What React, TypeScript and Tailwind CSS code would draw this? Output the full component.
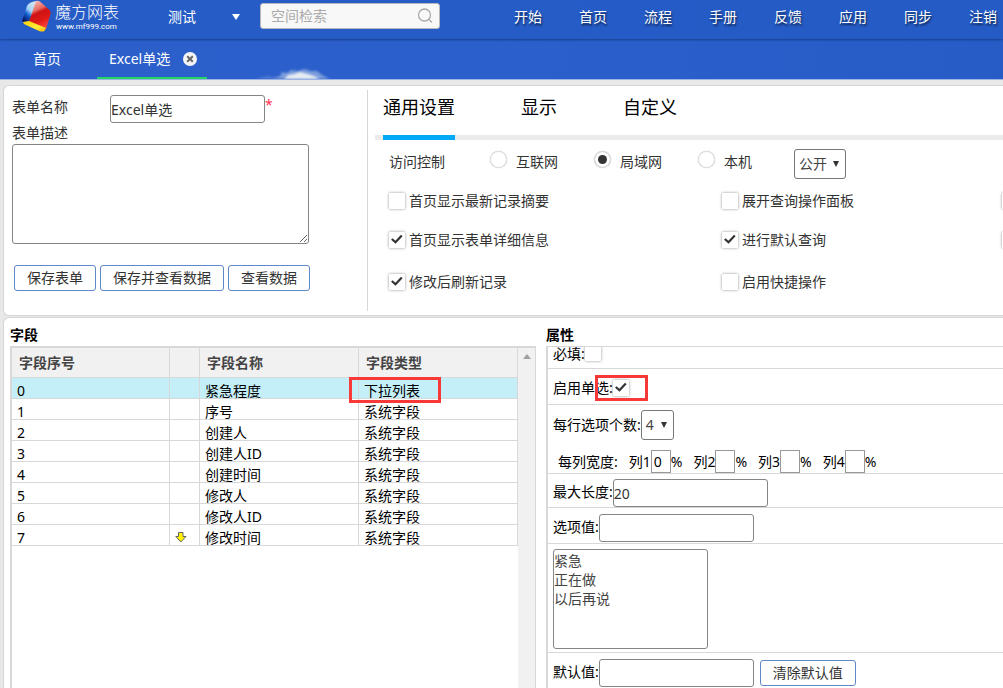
import React from "react";

const NAV = ["开始", "首页", "流程", "手册", "反馈", "应用", "同步", "注销"];
const FIELDS = [
  ["紧急程度", "下拉列表"],
  ["序号", "系统字段"],
  ["创建人", "系统字段"],
  ["创建人ID", "系统字段"],
  ["创建时间", "系统字段"],
  ["修改人", "系统字段"],
  ["修改人ID", "系统字段"],
  ["修改时间", "系统字段"],
];

const INPUT = "h-7 w-[155px] rounded-[3px] border border-[#858585] bg-white text-[#333] outline-none";
const BUTTON = "h-[26px] shrink-0 rounded-[3px] border border-[#5f88cb] bg-white px-3 text-[#333]";

function Logo() {
  return (
    <svg className="h-8 w-[30px] shrink-0" viewBox="0 0 30 32" aria-hidden="true">
      <defs>
        <linearGradient id="cubeRed" x1="0.3" y1="0" x2="0.65" y2="1">
          <stop offset="0" stopColor="#f6b9b4" />
          <stop offset="0.3" stopColor="#e86a62" />
          <stop offset="0.42" stopColor="#cc1414" />
          <stop offset="0.7" stopColor="#e01a16" />
          <stop offset="1" stopColor="#fb4a40" />
        </linearGradient>
        <linearGradient id="cubeBlue" x1="0.9" y1="0" x2="0.2" y2="1">
          <stop offset="0" stopColor="#e6eaf2" />
          <stop offset="0.5" stopColor="#a5d4f7" />
          <stop offset="0.7" stopColor="#1560cf" />
          <stop offset="1" stopColor="#02125f" />
        </linearGradient>
        <linearGradient id="cubeYellow" x1="0" y1="0" x2="1" y2="1">
          <stop offset="0" stopColor="#ffd000" />
          <stop offset="0.6" stopColor="#ffee3a" />
          <stop offset="1" stopColor="#f5b000" />
        </linearGradient>
      </defs>
      <path d="M14 1 Q7 2 5 6 L0 21 Q1 23 7 21 L17 2 Z" fill="url(#cubeBlue)" />
      <path d="M14 1 Q16 .5 18 1.500 L27.500 10 Q29 11.500 28.500 14 L24 29 L7 21.500 L11 10 Z" fill="url(#cubeRed)" />
      <path d="M1 22 L7 21 L24 28 L22.500 31 Q20 32 17 31 L2 24 Z" fill="url(#cubeYellow)" />
    </svg>
  );
}

function CheckBox({ checked = false, label }: { checked?: boolean; label?: string }) {
  return (
    <span className="relative inline-flex size-4 shrink-0">
      <input
        type="checkbox"
        defaultChecked={checked}
        aria-label={label}
        className="peer size-4 appearance-none rounded-[1px] bg-white shadow-[0_0_3px_rgba(0,0,0,0.45)]"
      />
      <svg className="pointer-events-none absolute inset-0 hidden size-4 peer-checked:block" viewBox="0 0 16 16" aria-hidden="true">
        <path d="M2.800 7 L6.500 10.300 L12.800 3.600" fill="none" stroke="#333" strokeWidth="2.200" />
      </svg>
    </span>
  );
}

function Check({ text, checked }: { text: string; checked?: boolean }) {
  return (
    <label className="flex items-center gap-1 whitespace-nowrap">
      <CheckBox checked={checked} />
      {text}
    </label>
  );
}

function Radio({ text, checked }: { text: string; checked?: boolean }) {
  return (
    <label className="flex shrink-0 items-start gap-[9px]">
      <input
        type="radio"
        name="access"
        defaultChecked={checked}
        className="mt-0.5 size-[17px] appearance-none rounded-full border border-[#ddd] bg-white p-[3px] shadow-[0_0_1px_rgba(0,0,0,0.25)] checked:bg-[#333] checked:bg-clip-content"
      />
      <span className="pt-[3px] leading-5">{text}</span>
    </label>
  );
}

function Select({ value, id, label, className }: { value: string; id?: string; label?: string; className: string }) {
  return (
    <span className="relative inline-flex shrink-0">
      <select id={id} aria-label={label} className={`h-[30px] appearance-none rounded-[3px] border border-[#777] bg-white pl-1 text-[#444] ${className}`}>
        <option>{value}</option>
      </select>
      <svg className="pointer-events-none absolute right-[7px] top-3 h-[6px] w-1.5" viewBox="0 0 6 6" aria-hidden="true">
        <path d="M0 0 H6 L3 6 Z" fill="#333" />
      </svg>
    </span>
  );
}

function Header() {
  return (
    <header className="relative shrink-0 overflow-hidden border-b border-[#9fb4e6] bg-linear-to-r from-[#2c5fca] via-[#2b5fcb] to-[#275cc7] text-white">
      <svg className="absolute bottom-0 left-[250px] h-3 w-[84px]" viewBox="0 0 84 12" aria-hidden="true">
        <defs>
          <filter id="soft" x="-20%" y="-60%" width="140%" height="220%">
            <feGaussianBlur stdDeviation="1" />
          </filter>
        </defs>
        <path d="M22 12 L30 9 L32 5 L37 6 L41 3 L48 4 L54 2 L61 4 L67 4 L72 8 L80 12 Z" fill="#8facdf" opacity=".8" filter="url(#soft)" />
        <path d="M34 12 L38 8 L44 7 L50 5 L58 7 L64 9 L70 12 Z" fill="#e6ecf2" filter="url(#soft)" />
        <path d="M5 12 L18 9 L30 12 Z" fill="#6d91dc" opacity=".6" filter="url(#soft)" />
      </svg>
      <div className="relative flex h-[39px] items-start bg-[#235ac3]/60 shadow-[0_1px_2px_rgba(15,45,115,0.7)]">
        <a href="#home" className="flex w-[146px] shrink-0 gap-[3px] pl-[22px]">
          <Logo />
          <span className="flex flex-col whitespace-nowrap pt-0.5">
            <span className="text-base leading-5 font-light">魔方网表</span>
            <span className="pl-px font-[Roboto,sans-serif] text-[8px] leading-[10px]">www.mf999.com</span>
          </span>
        </a>
        <button className="flex h-[34px] shrink-0 items-center gap-9 pl-[22px]">
          测试
          <svg className="h-[6px] w-2" viewBox="0 0 8 6" aria-hidden="true">
            <path d="M0 0 H8 L4 6 Z" fill="#fff" />
          </svg>
        </button>
        <div className="mt-[3px] ml-5 flex h-[26px] w-[180px] shrink-0 items-center rounded-[3px] border border-[#b5b8bd] bg-[#f8f8f8] pr-1.5 pl-2.5">
          <input type="text" aria-label="空间检索" placeholder="空间检索" className="min-w-0 flex-1 bg-transparent text-[#333] outline-none placeholder:text-[#aaa]" />
          <svg className="size-4 shrink-0" viewBox="0 0 16 16" fill="none" stroke="#aaa" strokeWidth="1.300" aria-hidden="true">
            <circle cx="7.500" cy="7" r="6" />
            <path d="M12 11.500 L15 14.500" />
          </svg>
        </div>
        <nav className="ml-auto flex h-[34px] items-center gap-[37px] pr-1.5 pl-4 whitespace-nowrap [text-shadow:1px_2px_2px_rgba(0,0,0,0.6)]">
          {NAV.map((n) => (
            <a key={n} href={`#${n}`}>
              {n}
            </a>
          ))}
        </nav>
      </div>
      <div className="relative flex h-10 items-stretch pl-[33px]">
        <a href="#tab-home" className="flex w-16 items-center">
          首页
        </a>
        <div className="flex items-center gap-[13px] border-b-2 border-[#22d663] pt-0.5 pr-2.5 pl-3">
          <a href="#tab-excel">Excel单选</a>
          <button aria-label="关闭">
            <svg className="block size-3.5" viewBox="0 0 14 14" aria-hidden="true">
              <circle cx="7" cy="7" r="7" fill="#f4f4f4" />
              <path d="M4.200 4.200 L9.800 9.800 M9.800 4.200 L4.200 9.800" stroke="#666" strokeWidth="2" />
            </svg>
          </button>
        </div>
      </div>
    </header>
  );
}

function FormPanel() {
  return (
    <section className="flex h-[231px] shrink-0 rounded-l-md border border-r-0 border-[#d6d6d6] bg-white text-[#333]">
      <form className="my-1 w-[364px] shrink-0 border-r border-[#d6d6d6] pt-[5px] pl-2">
        <div className="flex items-start">
          <label htmlFor="form-name" className="w-[98px] leading-6">
            表单名称
          </label>
          <input id="form-name" defaultValue="Excel单选" className={INPUT} />
          <span className="text-[#f35]">*</span>
        </div>
        <label htmlFor="form-desc" className="block pb-px leading-5">
          表单描述
        </label>
        <textarea id="form-desc" className="block h-[100px] w-[297px] rounded-[3px] border border-[#858585] bg-white" />
        <div className="mt-[21px] flex gap-1 pl-0.5">
          <button type="button" className={BUTTON}>保存表单</button>
          <button type="button" className={BUTTON}>保存并查看数据</button>
          <button type="button" className={BUTTON}>查看数据</button>
        </div>
      </form>
      <div className="min-w-0 flex-1 overflow-hidden pl-[7px]">
        <div className="flex h-[54px] gap-[66px] border-b-[5px] border-[#ebebeb] pl-2 text-lg text-black">
          <button className="-mb-[5px] border-b-[5px] border-[#00a8f8] pb-2">通用设置</button>
          <button className="pb-2">显示</button>
          <button className="pb-2">自定义</button>
        </div>
        <div className="flex h-[41px] items-start pt-[9px] pl-3.5">
          <span className="mr-[45px] shrink-0 pt-[3px] leading-5">访问控制</span>
          <div className="mr-[42px] flex gap-9">
            <Radio text="互联网" />
            <Radio text="局域网" checked />
            <Radio text="本机" />
          </div>
          <Select value="公开" label="公开" className="w-[52px]" />
        </div>
        <div className="grid grid-cols-[333px_280px_280px] grid-rows-[39px_39px_46px] pl-3.5">
          <Check text="首页显示最新记录摘要" />
          <Check text="展开查询操作面板" />
          <span className="flex items-center"><CheckBox label="选项" /></span>
          <Check text="首页显示表单详细信息" checked />
          <Check text="进行默认查询" checked />
          <span className="flex items-center"><CheckBox label="选项" /></span>
          <Check text="修改后刷新记录" checked />
          <Check text="启用快捷操作" />
        </div>
      </div>
    </section>
  );
}

function FieldTable() {
  const cell = "border-r border-b border-[#d8d8d8] p-0";
  const inner = "h-5 pt-[3px] pl-[5px] leading-5";
  const head = "pl-[7px] leading-7";
  return (
    <div className="flex w-[526px] shrink-0 flex-col">
      <h2 className="h-7 pt-[7px] leading-5 font-bold">字段</h2>
      <div className="flex min-h-0 flex-1 border-2 border-r border-b-0 border-[#d8d8d8]">
        <div className="min-w-0 flex-1">
          <table className="w-full table-fixed border-separate border-spacing-0">
            <thead>
              <tr className="h-[30px] bg-[#f1f1f1] text-left text-[#444]">
                <th className={`w-[158px] ${cell}`}><div className={head}>字段序号</div></th>
                <th className={`w-[30px] ${cell}`} />
                <th className={`w-[159px] ${cell}`}><div className={head}>字段名称</div></th>
                <th className={cell}><div className={head}>字段类型</div></th>
              </tr>
            </thead>
            <tbody>
              {FIELDS.map(([name, type], i) => (
                <tr key={name} className={i === 0 ? "bg-[#c4eff9]" : "bg-white"}>
                  <td className={cell}><div className={inner}>{i}</div></td>
                  <td className={cell}>
                    {i === FIELDS.length - 1 && (
                      <svg className="mt-1 ml-[5px] h-[11px] w-3" viewBox="0 0 12 11" aria-hidden="true">
                        <path d="M3.500 .5 H8 V4.500 H11 L5.800 10 L.8 4.500 H3.500 Z" fill="#fff200" stroke="#666" />
                      </svg>
                    )}
                  </td>
                  <td className={cell}><div className={inner}>{name}</div></td>
                  <td className={cell}>
                    <div className={`relative ${inner}`}>
                      {type}
                      {i === 0 && <span className="absolute -top-px -left-2.5 h-[26px] w-[92px] border-3 border-[#f93838]" />}
                    </div>
                  </td>
                </tr>
              ))}
            </tbody>
          </table>
        </div>
        <div className="flex w-[17px] shrink-0 justify-center bg-[#f1f1f1] pt-1.5">
          <svg className="h-[5px] w-2" viewBox="0 0 8 5" aria-hidden="true">
            <path d="M4 0 L8 5 H0 Z" fill="#a0a0a0" />
          </svg>
        </div>
      </div>
    </div>
  );
}

function Properties() {
  const row = "flex shrink-0 border-b border-[#d8d8d8] pl-[5px]";
  return (
    <div className="flex min-w-0 flex-1 flex-col">
      <h2 className="h-7 pt-[7px] leading-5 font-bold">属性</h2>
      <div className="flex min-h-0 flex-1 flex-col overflow-hidden border-t border-l-2 border-[#d8d8d8]">
        <label className={`h-[22px] items-start leading-[14px] ${row}`}>
          必填:
          <span className="-mt-0.5 flex">
            <CheckBox />
          </span>
        </label>
        <div className={`h-9 items-center pt-[3px] ${row}`}>
          <label className="relative flex items-center">
            启用单选:<CheckBox checked />
            <span className="absolute -top-[3px] left-[42px] h-[26px] w-[53px] border-3 border-[#f93838]" />
          </label>
        </div>
        <div className={`flex-col ${row}`}>
          <div className="flex h-[45px] items-center pb-[5px]">
            <label htmlFor="per-row">每行选项个数:</label>
            <Select id="per-row" value="4" className="w-[33px]" />
          </div>
          <div className="flex gap-[11px] pl-[5px] leading-[23px]">
            <span>每列宽度:</span>
            {["0", "", "", ""].map((v, i) => (
              <label key={i} className="flex shrink-0">
                列{i + 1}
                <input defaultValue={v} className="h-[23px] w-5 border border-[#999] px-0.5 outline-none" />%
              </label>
            ))}
          </div>
        </div>
        <div className={`pt-[5px] ${row}`}>
          <label htmlFor="max-length" className="leading-[26px]">最大长度:</label>
          <input id="max-length" defaultValue="20" className={INPUT} />
        </div>
        <div className={`pt-1.5 pb-px ${row}`}>
          <label htmlFor="option-value" className="leading-[26px]">选项值:</label>
          <input id="option-value" className={INPUT} />
        </div>
        <div className={`pt-[5px] pb-[3px] ${row}`}>
          <select multiple size={5} aria-label="选项值" className="h-[100px] w-[155px] overflow-hidden rounded-[3px] border border-[#858585] bg-white p-0 text-[#444]">
            <option className="h-[19px] p-0">紧急</option>
            <option className="h-[19px] p-0">正在做</option>
            <option className="h-[19px] p-0">以后再说</option>
          </select>
        </div>
        <div className="flex shrink-0 items-start pt-1.5 pl-[5px]">
          <label htmlFor="default-value" className="leading-[26px]">默认值:</label>
          <input id="default-value" className={INPUT} />
          <button className={`mt-px ml-1.5 ${BUTTON}`}>清除默认值</button>
        </div>
      </div>
    </div>
  );
}

export default function App() {
  return (
    <div className="flex h-screen flex-col overflow-hidden bg-[#e8e8e8] font-['Noto_Sans','Noto_Sans_CJK_SC',sans-serif] text-sm text-black">
      <Header />
      <main className="flex min-h-0 flex-1 flex-col gap-px pt-[5px] pl-[3px]">
        <FormPanel />
        <section className="flex min-h-0 flex-1 gap-2.5 rounded-tl-md border-t border-l border-[#d6d6d6] bg-white pl-1.5">
          <FieldTable />
          <Properties />
        </section>
      </main>
    </div>
  );
}
